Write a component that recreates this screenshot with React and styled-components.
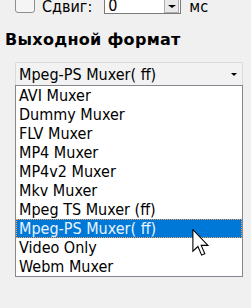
import React from "react";
import styled, { createGlobalStyle } from "styled-components";

const GlobalStyle = createGlobalStyle`
  html, body {
    margin: 0;
    padding: 0;
    background: #f0f0f0;
  }
  body {
    font-family: "DejaVu Sans Condensed", "DejaVu Sans", sans-serif;
    font-size: 16px;
    color: #000;
    overflow: hidden;
  }
`;

const Page = styled.div`
  position: relative;
  width: 251px;
  height: 308px;
  overflow: hidden;
`;

const ShiftRow = styled.div`
  display: flex;
  align-items: flex-end;
  height: 22px;
  margin-top: -8px;
  padding-left: 15px;
`;

const CheckBox = styled.div`
  box-sizing: border-box;
  width: 20px;
  height: 20px;
  margin-bottom: 1px;
  border: 1px solid #8e8e8e;
  border-radius: 3px;
  background: #f5f5f5;
`;

const Label = styled.span`
  margin-left: ${(p) => p.gap}px;
  line-height: 18px;
  margin-bottom: -2px;
`;

const SpinInput = styled.div`
  box-sizing: border-box;
  display: flex;
  justify-content: space-between;
  align-items: flex-end;
  width: 77px;
  height: 22px;
  margin-left: ${(p) => p.gap}px;
  border: 1px solid #7a7a7a;
  border-top: none;
  background: #fff;
`;

const SpinValue = styled.span`
  padding-left: 3px;
  line-height: 18px;
  margin-bottom: -2px;
  color: #000;
`;

const SpinButton = styled.div`
  box-sizing: border-box;
  display: flex;
  align-items: center;
  justify-content: center;
  width: 15px;
  height: 14px;
  margin: 0 1px 0 0;
  border: 1px solid #adadad;
  background: #e9e9e9;
`;

const Arrow = styled.span`
  width: 0;
  height: 0;
  border-left: ${(p) => p.size}px solid transparent;
  border-right: ${(p) => p.size}px solid transparent;
  border-top: ${(p) => p.size - 0.5}px solid #000;
  margin-right: ${(p) => p.right || 0}px;
`;

const Title = styled.div`
  margin: 16px 0 0 5px;
  font-family: "DejaVu Sans", sans-serif;
  font-weight: bold;
  font-size: 16px;
  letter-spacing: 0.3px;
  line-height: 19px;
`;

const Dropdown = styled.div`
  margin: 13px 8px 0 15px;
  width: 228px;
`;

const Combo = styled.div`
  box-sizing: border-box;
  display: flex;
  justify-content: space-between;
  align-items: center;
  height: 23px;
  padding: 0 0 0 3px;
  border: 1px solid #dadada;
  border-bottom: none;
  border-radius: 2px 2px 0 0;
  background: #f2f2f2;
  line-height: 19px;
`;

const List = styled.ul`
  box-sizing: border-box;
  margin: 0;
  padding: 0;
  list-style: none;
  border: 1px solid #828790;
  background: #fff;
`;

const Item = styled.li`
  height: 19px;
  line-height: 19px;
  padding-left: 3px;
  white-space: nowrap;
  background: ${(p) => (p.selected ? "#0078d7" : "transparent")};
  color: ${(p) => (p.selected ? "#eaf4ff" : "#000")};
  outline: ${(p) => (p.selected ? "1px dotted #f4a460" : "none")};
  outline-offset: -1px;
`;

const Cursor = styled.svg`
  position: absolute;
  left: 192px;
  top: 229px;
`;

const items = [
  "AVI Muxer",
  "Dummy Muxer",
  "FLV Muxer",
  "MP4 Muxer",
  "MP4v2 Muxer",
  "Mkv Muxer",
  "Mpeg TS Muxer (ff)",
  "Mpeg-PS Muxer( ff)",
  "Video Only",
  "Webm Muxer",
];

const App = () => {
  const current = "Mpeg-PS Muxer( ff)";

  return (
    <Page>
      <GlobalStyle />
      <ShiftRow>
        <CheckBox />
        <Label gap={7}>Сдвиг:</Label>
        <SpinInput gap={12}>
          <SpinValue>0</SpinValue>
          <SpinButton>
            <Arrow size={4} />
          </SpinButton>
        </SpinInput>
        <Label gap={8}>мс</Label>
      </ShiftRow>

      <Title>Выходной формат</Title>

      <Dropdown>
        <Combo>
          <span>{current}</span>
          <Arrow size={3.5} right={5} />
        </Combo>
        <List>
          {items.map((name) => (
            <Item key={name} selected={name === current}>
              {name}
            </Item>
          ))}
        </List>
      </Dropdown>

      <Cursor width="19" height="28" viewBox="0 0 13 19.5">
        <path
          d="M0.5 0.5 L0.5 15.5 L4 12.2 L6.6 18.2 L8.8 17.2 L6.3 11.4 L11 11.4 Z"
          fill="#fff"
          stroke="#000"
          strokeWidth="0.75"
          strokeLinejoin="miter"
        />
      </Cursor>
    </Page>
  );
};

export default App;
